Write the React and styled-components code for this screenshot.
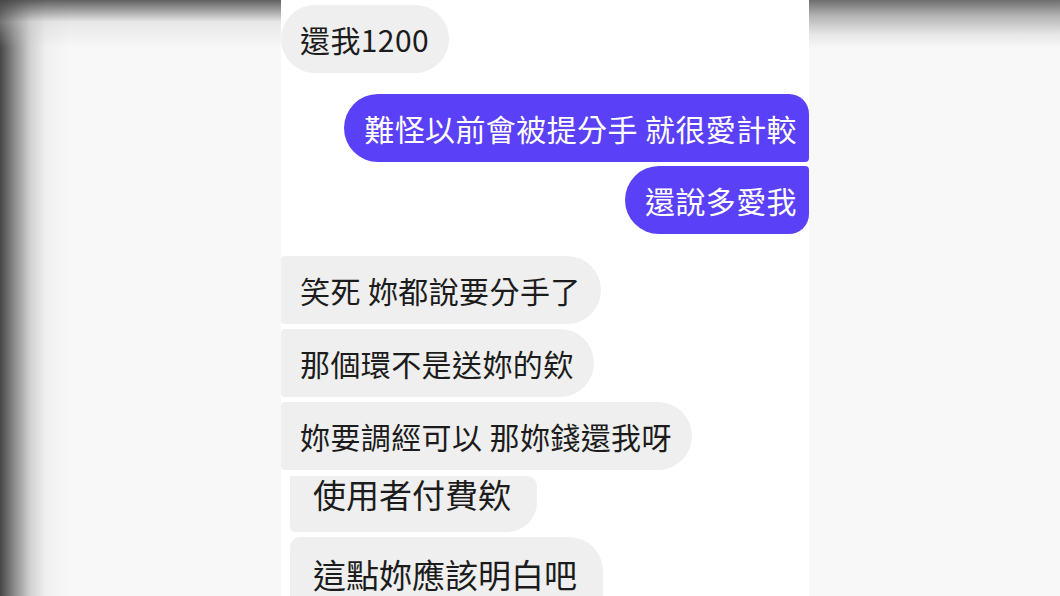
import styled, { createGlobalStyle } from "styled-components";

const GlobalStyle = createGlobalStyle`
  html, body {
    margin: 0;
    padding: 0;
    overflow: hidden;
    background: #f8f8f8;
  }
  body {
    font-family: "Noto Sans CJK TC", "Noto Sans", sans-serif;
  }
`;

const messages = [
  { id: 1, text: "還我1200", side: "in", top: 5, shape: "full" },
  { id: 2, text: "難怪以前會被提分手 就很愛計較", side: "out", top: 21, shape: "first" },
  { id: 3, text: "還說多愛我", side: "out", top: 4, shape: "last" },
  { id: 4, text: "笑死 妳都說要分手了", side: "in", top: 22, shape: "cut" },
  { id: 5, text: "那個環不是送妳的欸", side: "in", top: 5, shape: "cut" },
  { id: 6, text: "妳要調經可以 那妳錢還我呀", side: "in", top: 5, shape: "cut" },
];

const pasted = [
  { id: 7, text: "使用者付費欸", top: 6, height: 56, line: 36, radius: "2px 10px 30px 6px" },
  { id: 8, text: "這點妳應該明白吧", top: 5, height: 76, line: 74, radius: "10px 34px 0 0" },
];

const radii = {
  full: "34px",
  first: "34px 20px 4px 34px",
  last: "34px 4px 20px 34px",
  cut: "4px 34px 34px 4px",
};

const App = () => {
  return (
    <>
      <GlobalStyle />
      <Page>
        <LeftSide />
        <Phone>
          {messages.map((m) => (
            <Row key={m.id} $side={m.side} $top={m.top}>
              <Bubble $side={m.side} $radius={radii[m.shape]}>
                {m.text}
              </Bubble>
            </Row>
          ))}
          {pasted.map((m) => (
            <Row key={m.id} $side="in" $top={m.top}>
              <LargeBubble $height={m.height} $line={m.line} $radius={m.radius}>
                {m.text}
              </LargeBubble>
            </Row>
          ))}
        </Phone>
        <RightSide />
      </Page>
    </>
  );
};

const Page = styled.main`
  display: flex;
  width: 1060px;
  height: 596px;
`;

const LeftSide = styled.div`
  flex: 0 0 281px;
  background:
    linear-gradient(to bottom, rgba(70, 70, 70, 0.85), rgba(200, 200, 200, 0.35) 22px, rgba(255, 255, 255, 0) 48px),
    linear-gradient(to right, #454545, #8a8a8a 14px, #d0d0d0 30px, #f0f0f0 46px, #f8f8f8 70px);
`;

const RightSide = styled.div`
  flex: 1;
  background:
    linear-gradient(to bottom, #6e6e6e, #b4b4b4 16px, #e6e6e6 34px, #f8f8f8 48px);
`;

const Phone = styled.section`
  flex: 0 0 528px;
  display: flex;
  flex-direction: column;
  background: #ffffff;
  overflow: hidden;
`;

const Row = styled.div`
  display: flex;
  justify-content: ${(p) => (p.$side === "out" ? "flex-end" : "flex-start")};
  margin-top: ${(p) => p.$top}px;
  flex-shrink: 0;
`;

const Bubble = styled.div`
  height: 68px;
  line-height: 68px;
  padding: ${(p) => (p.$side === "out" ? "0 12px 0 20px" : "0 20px 0 19px")};
  border-radius: ${(p) => p.$radius};
  background: ${(p) => (p.$side === "out" ? "#5a40f6" : "#efefef")};
  color: ${(p) => (p.$side === "out" ? "#ffffff" : "#1c1c1c")};
  font-size: 30px;
  letter-spacing: 0.4px;
  white-space: nowrap;
`;

const LargeBubble = styled.div`
  margin-left: 9px;
  height: ${(p) => p.$height}px;
  line-height: ${(p) => p.$line}px;
  padding: 0 26px 0 23px;
  border-radius: ${(p) => p.$radius};
  background: #efefef;
  color: #1c1c1c;
  font-size: 33px;
  white-space: nowrap;
`;

export default App;
